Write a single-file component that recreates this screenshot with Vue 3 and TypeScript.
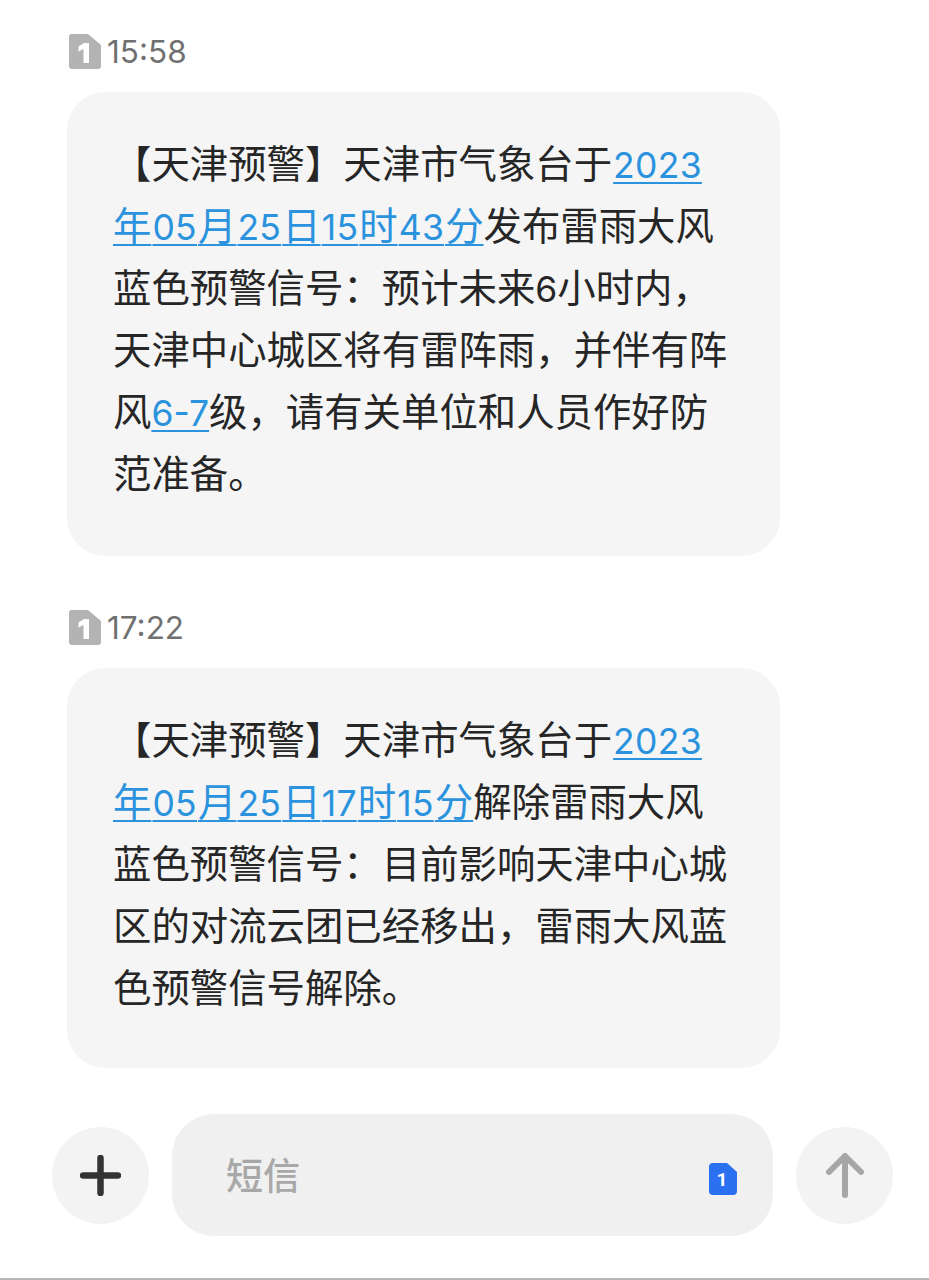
<script setup lang="ts">
type Run = { text: string; num: boolean; date: boolean }
type Part = { link: boolean; runs: Run[] }

interface Message {
  time: string
  lines: string[]
}

// [[ ]] marks the parts the SMS app turned into links
const messages: Message[] = [
  {
    time: '15:58',
    lines: [
      '【天津预警】天津市气象台于[[2023]]',
      '[[年05月25日15时43分]]发布雷雨大风',
      '蓝色预警信号：预计未来6小时内，',
      '天津中心城区将有雷阵雨，并伴有阵',
      '风[[6-7]]级，请有关单位和人员作好防',
      '范准备。',
    ],
  },
  {
    time: '17:22',
    lines: [
      '【天津预警】天津市气象台于[[2023]]',
      '[[年05月25日17时15分]]解除雷雨大风',
      '蓝色预警信号：目前影响天津中心城',
      '区的对流云团已经移出，雷雨大风蓝',
      '色预警信号解除。',
    ],
  },
]

function toParts(line: string): Part[] {
  return line.split(/(\[\[.*?\]\])/).filter(Boolean).map((chunk) => {
    const link = chunk.startsWith('[[')
    const body = link ? chunk.slice(2, -2) : chunk
    const runs = body.split(/([0-9-]+)/).filter(Boolean).map((text) => {
      const num = /^[0-9-]+$/.test(text)
      return { text, num, date: num && link && !text.includes('-') }
    })
    return { link, runs }
  })
}
</script>

<template>
  <div class="page">
    <div class="thread">
      <section v-for="msg in messages" :key="msg.time" class="message">
        <div class="meta">
          <svg class="sim" width="32" height="35" viewBox="0 0 32 35">
            <path d="M3 0H19L32 11V32a3 3 0 0 1-3 3H3a3 3 0 0 1-3-3V3a3 3 0 0 1 3-3Z" fill="#b3b3b3" />
            <path d="M9.500 12.500 15 9h5v20h-5.500V15l-5 2.500Z" fill="#fff" />
          </svg>
          <span class="time">{{ msg.time }}</span>
        </div>
        <div class="bubble">
          <div v-for="(line, i) in msg.lines" :key="i" class="line">
            <span v-for="(part, j) in toParts(line)" :key="j" :class="{ link: part.link }">
              <span
                v-for="(run, k) in part.runs"
                :key="k"
                :class="{ num: run.num, date: run.date }"
              >{{ run.text }}</span>
            </span>
          </div>
        </div>
      </section>
    </div>

    <div class="composer">
      <button class="round" type="button" aria-label="add">
        <svg width="41" height="41" viewBox="0 0 41 41">
          <path d="M20.500 3V38M3 20.500H38" stroke="#333" stroke-width="6.500" stroke-linecap="round" fill="none" />
        </svg>
      </button>
      <div class="input">
        <span class="placeholder">短信</span>
        <svg class="sim-blue" width="28" height="32" viewBox="0 0 28 32">
          <path d="M4 0H18L28 9V28a4 4 0 0 1-4 4H4a4 4 0 0 1-4-4V4a4 4 0 0 1 4-4Z" fill="#2a70f0" />
          <text x="13" y="23" text-anchor="middle" class="sim-num">1</text>
        </svg>
      </div>
      <button class="round" type="button" aria-label="send">
        <svg width="38" height="46" viewBox="0 0 38 46">
          <path d="M19 43V4M3 20 19 4 35 20" stroke="#a6a6a6" stroke-width="6" stroke-linecap="round" stroke-linejoin="round" fill="none" />
        </svg>
      </button>
    </div>
    <div class="bottom-line" />
  </div>
</template>

<style>
html,
body {
  margin: 0;
  background: #fff;
}
</style>

<style scoped>
.page {
  width: 929px;
  height: 1280px;
  box-sizing: border-box;
  padding-top: 34px;
  display: flex;
  flex-direction: column;
  font-family: "Noto Sans CJK SC", "Noto Sans", sans-serif;
  overflow: hidden;
}

.thread {
  display: flex;
  flex-direction: column;
  gap: 54px;
  padding-left: 67px;
}

.meta {
  display: flex;
  align-items: center;
  gap: 6px;
  height: 35px;
  margin-left: 2px;
  margin-bottom: 23px;
}

.time {
  font-family: "Inter", "Noto Sans", sans-serif;
  font-size: 31.500px;
  color: #707070;
  line-height: 35px;
}

.bubble {
  width: 713px;
  box-sizing: border-box;
  padding: 38px 46px 54px;
  background: #f5f5f5;
  border-radius: 38px;
}

.message:last-child .bubble {
  padding-bottom: 52px;
}

.line {
  height: 62px;
  line-height: 62px;
  font-size: 38.400px;
  color: #262626;
  white-space: nowrap;
}

.num {
  font-family: "Inter", "Noto Sans", sans-serif;
  font-size: 35.500px;
  line-height: 0;
}

.date {
  padding: 0 1px;
  letter-spacing: 0.300px;
}

.link {
  color: #2b93de;
  text-decoration: underline;
  text-decoration-thickness: 2px;
  text-decoration-skip-ink: none;
  text-underline-offset: 4px;
}

.composer {
  display: flex;
  align-items: center;
  gap: 23px;
  margin-top: 46px;
  padding-left: 52px;
}

.round {
  width: 97px;
  height: 97px;
  padding: 0;
  border: 0;
  border-radius: 50%;
  background: #f3f3f3;
  display: flex;
  align-items: center;
  justify-content: center;
  flex: none;
}

.input {
  width: 601px;
  height: 122px;
  box-sizing: border-box;
  padding: 0 36px 0 54px;
  border-radius: 42px;
  background: #f0f0f0;
  display: flex;
  align-items: center;
  justify-content: space-between;
  flex: none;
}

.placeholder {
  font-size: 37px;
  font-weight: 500;
  color: #a8a8a8;
  position: relative;
  top: -1px;
}

.sim-blue {
  margin-top: 7px;
}

.sim-num {
  font-family: "Roboto", sans-serif;
  font-size: 19px;
  font-weight: 700;
  fill: #fff;
}

.bottom-line {
  height: 2px;
  margin-top: auto;
  background: #b5b5b5;
}
</style>
